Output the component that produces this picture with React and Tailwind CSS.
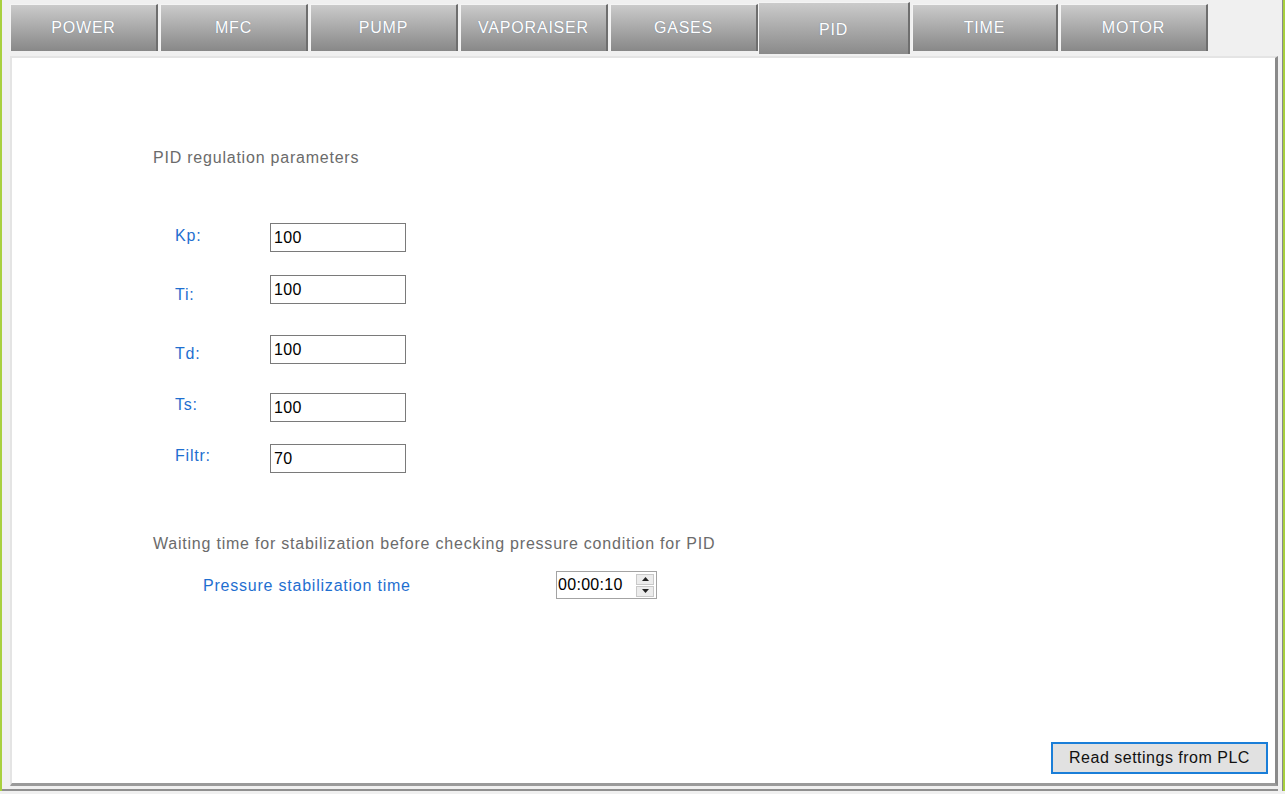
import React from "react";

const tabs = ["POWER", "MFC", "PUMP", "VAPORAISER", "GASES", "PID", "TIME", "MOTOR"];

const params = [
  { label: "Kp:", value: "100", gap: "mt-[56px]", shift: "mt-[1px]" },
  { label: "Ti:", value: "100", gap: "mt-[23px]", shift: "mt-[8px]" },
  { label: "Td:", value: "100", gap: "mt-[31px]", shift: "mt-[7px]" },
  { label: "Ts:", value: "100", gap: "mt-[29px]", shift: "mt-[0px]" },
  { label: "Filtr:", value: "70", gap: "mt-[22px]", shift: "mt-[0px]" },
];

function Tab({ name, active }) {
  if (active) {
    return (
      <div className="relative z-10 -mt-[2px] -ml-[2px] mr-[2px] flex h-[52px] w-[152px] items-center justify-center border-t border-l border-[#f4f4f4] border-r-2 border-r-[#6e6e6e] bg-gradient-to-b from-[#cbcbcb] to-[#8a8a8a] pt-[2px] text-[16px] tracking-[0.8px] text-white [text-shadow:0_0_1px_#6a7a90]">
        {name}
      </div>
    );
  }
  const w = name === "TIME" ? "w-[146px]" : "w-[148px]";
  return (
    <div className={`flex h-[47px] ${w} mr-[2px] items-center justify-center border-t border-l border-[#f4f4f4] border-r-2 border-r-[#6e6e6e] bg-gradient-to-b from-[#cbcbcb] to-[#888888] pb-[1px] text-[16px] tracking-[0.8px] text-white [text-shadow:0_0_1px_#6a7a90]`}>
      {name}
    </div>
  );
}

export default function App() {
  return (
    <div className="flex h-[794px] w-[1285px] bg-[#f0f0f0] font-['Liberation_Sans',Arial,sans-serif] tracking-[0.78px]">
      <div className="h-[791px] w-[2px] bg-[#a8d03e]" />
      <div className="flex h-[791px] flex-1 flex-col border-b-2 border-[#8f8f8f] pl-[8px]">
        <div className="flex pt-[4px]">
          {tabs.map((t) => (
            <Tab key={t} name={t} active={t === "PID"} />
          ))}
        </div>
        <div className="mt-[2px] flex w-[1268px] flex-1 flex-col border-l-2 border-t-2 border-[#e4e4e4] border-r-[3px] border-r-[#8a8a8a] border-b-[3px] border-b-[#9a9a9a] bg-white">
          <div className="flex flex-1 flex-col pl-[141px] pt-[91px]">
            <div className="h-[18px] text-[16px] leading-[18px] text-[#6b6b6b]">
              PID regulation parameters
            </div>
            {params.map((p) => (
              <div key={p.label} className={`flex ${p.gap}`}>
                <div className={`w-[117px] pl-[22px] pt-[3px] text-[16px] leading-[18px] text-[#1f6fd0] ${p.shift}`}>
                  {p.label}
                </div>
                <div className="flex h-[29px] w-[136px] items-center border border-[#7a7a7a] bg-white pl-[3px] text-[16px] tracking-[0.3px] text-black">
                  {p.value}
                </div>
              </div>
            ))}
            <div className="mt-[62px] h-[18px] text-[16px] leading-[18px] text-[#6b6b6b]">
              Waiting time for stabilization before checking pressure condition for PID
            </div>
            <div className="mt-[18px] flex items-start">
              <div className="mt-[6px] w-[403px] pl-[50px] text-[16px] leading-[18px] text-[#1f6fd0]">
                Pressure stabilization time
              </div>
              <div className="flex h-[28px] w-[101px] items-center border border-[#a3a3a3] bg-white pl-[1px]">
                <span className="w-[78px] text-[16px] tracking-[0.3px] text-black">00:00:10</span>
                <div className="flex flex-col gap-[1px]">
                  <div className="flex h-[11px] w-[18px] items-center justify-center border border-[#c9c9c9] bg-[#ececec]">
                    <svg width="7" height="4" viewBox="0 0 7 4"><path d="M3.5 0L7 4H0z" fill="#222" /></svg>
                  </div>
                  <div className="flex h-[11px] w-[18px] items-center justify-center border border-[#c9c9c9] bg-[#ececec]">
                    <svg width="7" height="4" viewBox="0 0 7 4"><path d="M0 0h7L3.5 4z" fill="#222" /></svg>
                  </div>
                </div>
              </div>
            </div>
          </div>
          <div className="flex justify-end pb-[9px] pr-[7px]">
            <button className="h-[32px] w-[217px] border-2 border-[#1a7ed8] bg-[#e1e1e1] text-[16px] tracking-[0.5px] text-[#111]">
              Read settings from PLC
            </button>
          </div>
        </div>
        <div className="h-[3px]" />
      </div>
      <div className="flex w-[7px] flex-col">
        <div className="flex h-[791px]">
          <div className="w-[4px]" />
          <div className="w-[1px] bg-[#8a8a8a]" />
          <div className="w-[2px] bg-[#a8d03e]" />
        </div>
      </div>
    </div>
  );
}
